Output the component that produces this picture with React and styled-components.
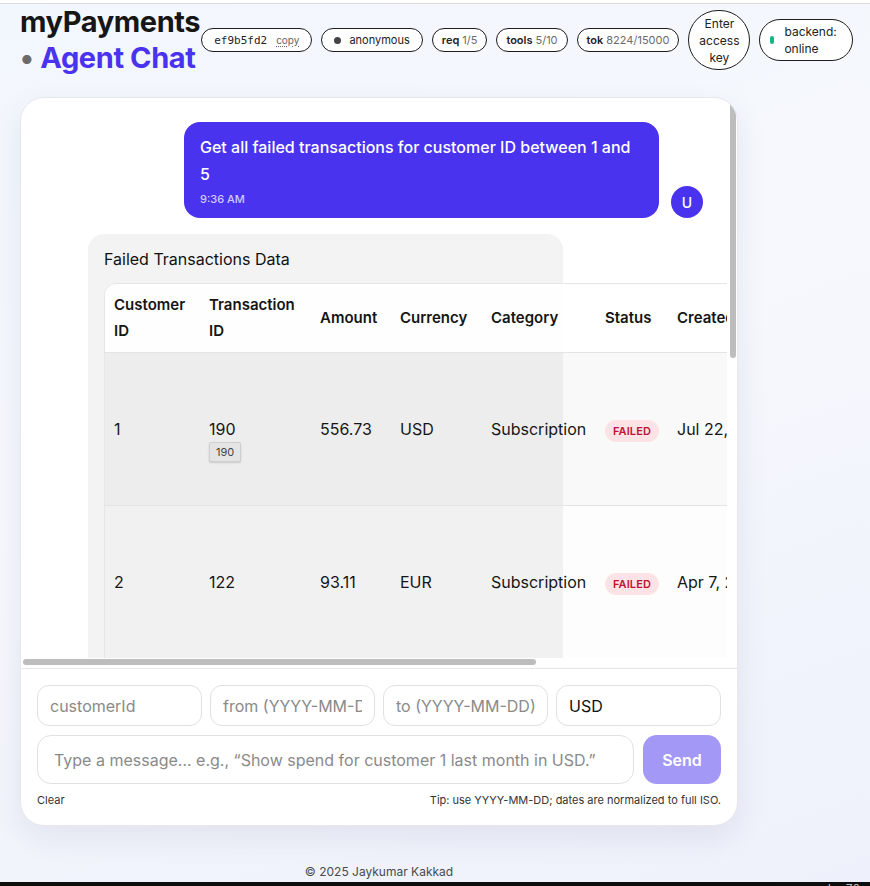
import React from "react";
import styled, { createGlobalStyle } from "styled-components";

const GlobalStyle = createGlobalStyle`
  html, body {
    margin: 0;
    padding: 0;
    background: #fff;
  }
  body {
    font-family: Inter, "Noto Sans", "Liberation Sans", sans-serif;
    color: #111;
  }
  * {
    box-sizing: border-box;
  }
`;

const Page = styled.div`
  margin-top: 3px;
  border-top: 1px solid #dcdcdc;
  padding: 0 20px;
  background: linear-gradient(160deg, #f2f7fd 0%, #f6f8fd 45%, #eef0fb 100%);
`;

const Header = styled.header`
  display: flex;
  align-items: center;
  gap: 9px;
`;

const Title = styled.h1`
  margin: 0 -8px 0 0;
  font-size: 29px;
  line-height: 36px;
  font-weight: 700;
  letter-spacing: -0.4px;
  color: #161616;
`;

const TitleLine = styled.span`
  display: block;
`;

const TitleDot = styled.span`
  color: #6b6b6b;
  margin-right: 7px;
`;

const TitleAccent = styled.span`
  color: #4a33ee;
`;

const Pill = styled.span`
  display: inline-flex;
  align-items: center;
  gap: ${(p) => p.$gap || 3}px;
  height: 24px;
  padding: 0 ${(p) => p.$pad || 9}px;
  border: 1px solid #1d1d1d;
  border-radius: 999px;
  background: #fff;
  font-size: 11px;
  color: #222;
  white-space: nowrap;

  b {
    font-weight: 600;
  }
  em {
    font-style: normal;
    color: #6a6a6a;
  }
`;

const Mono = styled.span`
  font-family: "DejaVu Sans Mono", "Liberation Mono", monospace;
  font-size: 11px;
  color: #222;
`;

const CopyLink = styled.span`
  font-size: 10px;
  color: #666;
  text-decoration: underline dotted;
  text-underline-offset: 2px;
`;

const Dot = styled.i`
  flex: none;
  width: ${(p) => p.$w || 7}px;
  height: ${(p) => p.$h || 7}px;
  border-radius: 4px;
  background: ${(p) => p.$color || "#444"};
`;

const KeyButton = styled.button`
  flex: none;
  width: 62px;
  height: 60px;
  padding: 0 6px;
  border: 1px solid #1d1d1d;
  border-radius: 999px;
  background: #fff;
  font-family: inherit;
  font-size: 12px;
  line-height: 17px;
  color: #222;
`;

const Status = styled.div`
  flex: none;
  display: flex;
  align-items: center;
  gap: 10px;
  width: 94px;
  height: 42px;
  padding: 0 10px;
  border: 1px solid #1d1d1d;
  border-radius: 999px;
  background: #fff;
  font-size: 12px;
  line-height: 17px;
  color: #222;
`;

const Card = styled.section`
  width: 718px;
  height: 729px;
  margin-top: 21px;
  display: flex;
  flex-direction: column;
  background: #fff;
  border: 1px solid #e7e8ee;
  border-radius: 24px;
  box-shadow: 0 12px 32px rgba(30, 30, 80, 0.08);
  overflow: hidden;
`;

const ScrollPane = styled.div`
  position: relative;
  flex: 1;
  min-height: 0;
  display: flex;
`;

const Messages = styled.div`
  flex: 1;
  min-width: 0;
  margin: 0 10px 10px 0;
  overflow: auto;
  scrollbar-width: none;
  padding: 24px 24px 24px 23px;
  display: flex;
  flex-direction: column;
  gap: 16px;
`;

const Thumb = styled.div`
  position: absolute;
  background: #bdbdbd;
  border-radius: 4px;
  ${(p) =>
    p.$vertical
      ? "top: 2px; right: 1px; width: 6px; height: 258px;"
      : "left: 2px; bottom: 3px; height: 6px; width: 513px;"}
`;

const Row = styled.div`
  display: flex;
  align-items: flex-end;
  gap: 12px;
  justify-content: ${(p) => (p.$mine ? "flex-end" : "flex-start")};
`;

const Avatar = styled.div`
  flex: none;
  width: 32px;
  height: 32px;
  border-radius: 50%;
  display: flex;
  align-items: center;
  justify-content: center;
  font-size: 14px;
  font-weight: 500;
  color: #fff;
  background: ${(p) => (p.$mine ? "#4a33ee" : "#9aa0ac")};
`;

const Bubble = styled.div`
  max-width: 475px;
  padding: 12px 16px;
  border-radius: 16px;
  background: ${(p) => (p.$mine ? "#4a33ee" : "#f3f3f3")};
  color: ${(p) => (p.$mine ? "#fff" : "#111")};
  font-size: 16px;
  line-height: 27px;
  font-weight: ${(p) => (p.$mine ? 500 : 400)};
`;

const Time = styled.div`
  margin-top: 4px;
  font-size: 11px;
  line-height: 14px;
  color: rgba(255, 255, 255, 0.75);
`;

const TableBox = styled.div`
  margin-top: 10px;
  width: 900px;
  border: 1px solid #e6e6e6;
  border-radius: 12px;
  overflow: hidden;
`;

const Table = styled.table`
  width: 100%;
  table-layout: fixed;
  border-collapse: separate;
  border-spacing: 0;
  font-size: 16px;

  th {
    text-align: left;
    vertical-align: middle;
    padding: 8px 9px;
    font-size: 15px;
    line-height: 26px;
    font-weight: 600;
    color: #151515;
    background: rgba(255, 255, 255, 0.85);
  }
  td {
    height: 153px;
    padding: 0 9px;
    vertical-align: middle;
    border-top: 1px solid #e4e4e4;
    color: #161616;
    white-space: nowrap;
  }
`;

const BodyRow = styled.tr`
  background: ${(p) => (p.$hover ? "rgba(0,0,0,0.024)" : "rgba(0,0,0,0.008)")};
`;

const Badge = styled.span`
  display: inline-flex;
  align-items: center;
  height: 22px;
  padding: 0 8px;
  border-radius: 999px;
  background: #fde2e6;
  color: #be123c;
  font-size: 11px;
  font-weight: 600;
  letter-spacing: 0.1px;
`;

const Hint = styled.span`
  position: relative;
  display: inline-block;
`;

const Tip = styled.span`
  position: absolute;
  left: 0;
  top: 100%;
  margin-top: -1px;
  padding: 2px 6px;
  background: #e4e4e4;
  border: 1px solid #cfcfcf;
  border-radius: 2px;
  box-shadow: 0 1px 2px rgba(0, 0, 0, 0.15);
  font-size: 11px;
  line-height: 14px;
  color: #444;
`;

const Composer = styled.div`
  flex: none;
  border-top: 1px solid #e6e6e6;
  padding: 16px;
  display: flex;
  flex-direction: column;
  gap: 8px;
`;

const Filters = styled.div`
  display: grid;
  grid-template-columns: repeat(4, 1fr);
  gap: 8px;
`;

const Field = styled.input`
  width: 100%;
  min-width: 0;
  height: 41px;
  padding: 0 12px;
  border: 1px solid #e1e1e4;
  border-radius: 12px;
  font-family: inherit;
  font-size: 16px;
  color: #111;
  background: #fff;

  &::placeholder {
    color: #8a8a8a;
  }
`;

const SendRow = styled.div`
  display: flex;
  gap: 9px;
  margin-top: 1px;
`;

const MessageField = styled(Field)`
  flex: 1;
  height: 49px;
  padding: 0 16px;
  border-radius: 14px;
`;

const SendButton = styled.button`
  flex: none;
  width: 78px;
  height: 49px;
  border: none;
  border-radius: 14px;
  background: #4a33ee;
  opacity: 0.5;
  color: #fff;
  font-family: inherit;
  font-size: 16px;
  font-weight: 600;
`;

const Meta = styled.div`
  display: flex;
  justify-content: space-between;
  font-size: 11px;
  line-height: 17px;
  color: #333;
`;

const Footer = styled.footer`
  width: 718px;
  padding: 38px 0 2px;
  text-align: center;
  font-size: 12px;
  line-height: 16px;
  color: #4a4a4a;
`;

const DevBar = styled.div`
  margin: 0 -20px;
  height: 20px;
  background: #0d0d0d;
  display: flex;
  justify-content: flex-end;
  padding: 0 10px 0 0;
  font-size: 12px;
  line-height: 14px;
  color: #bbb;
`;

const rows = [
  { cid: 1, tid: 190, amount: "556.73", cur: "USD", cat: "Subscription", created: "Jul 22, 2025, 10:14 AM", merchant: "StreamBox" },
  { cid: 2, tid: 122, amount: "93.11", cur: "EUR", cat: "Subscription", created: "Apr 7, 2025, 3:42 PM", merchant: "CloudNote" },
  { cid: 3, tid: 57, amount: "1204.50", cur: "USD", cat: "Electronics", created: "Feb 18, 2025, 9:05 AM", merchant: "TechMart" },
  { cid: 3, tid: 211, amount: "48.00", cur: "GBP", cat: "Dining", created: "May 30, 2025, 8:20 PM", merchant: "Bistro 21" },
  { cid: 4, tid: 88, amount: "310.25", cur: "INR", cat: "Travel", created: "Mar 11, 2025, 6:47 AM", merchant: "RailGo" },
  { cid: 5, tid: 143, amount: "75.90", cur: "USD", cat: "Groceries", created: "Jun 2, 2025, 12:31 PM", merchant: "FreshCart" },
];

const cols = [95, 111, 80, 91, 114, 72, 187, 150];

export default function App() {
  return (
    <>
      <GlobalStyle />
      <Page>
        <Header>
          <Title>
            <TitleLine>myPayments</TitleLine>
            <TitleLine>
              <TitleDot>•</TitleDot>
              <TitleAccent>Agent Chat</TitleAccent>
            </TitleLine>
          </Title>
          <Pill $gap={9} $pad={12}>
            <Mono>ef9b5fd2</Mono>
            <CopyLink>copy</CopyLink>
          </Pill>
          <Pill $gap={8} $pad={12}>
            <Dot />
            anonymous
          </Pill>
          <Pill>
            <b>req</b>
            <em>1/5</em>
          </Pill>
          <Pill>
            <b>tools</b>
            <em>5/10</em>
          </Pill>
          <Pill>
            <b>tok</b>
            <em>8224/15000</em>
          </Pill>
          <KeyButton>Enter access key</KeyButton>
          <Status>
            <Dot $w={4} $h={8} $color="#10b981" />
            <span>backend: online</span>
          </Status>
        </Header>

        <Card>
          <ScrollPane>
            <Messages>
              <Row $mine>
                <Bubble $mine>
                  Get all failed transactions for customer ID between 1 and 5
                  <Time>9:36 AM</Time>
                </Bubble>
                <Avatar $mine>U</Avatar>
              </Row>
              <Row>
                <Avatar>A</Avatar>
                <Bubble>
                  Failed Transactions Data
                  <TableBox>
                    <Table>
                      <colgroup>
                        {cols.map((w, i) => (
                          <col key={i} style={{ width: w }} />
                        ))}
                      </colgroup>
                      <thead>
                        <tr>
                          <th>Customer ID</th>
                          <th>Transaction ID</th>
                          <th>Amount</th>
                          <th>Currency</th>
                          <th>Category</th>
                          <th>Status</th>
                          <th>Created At</th>
                          <th>Merchant</th>
                        </tr>
                      </thead>
                      <tbody>
                        {rows.map((r, i) => (
                          <BodyRow key={i} $hover={i === 0}>
                            <td>{r.cid}</td>
                            <td>
                              <Hint>
                                {r.tid}
                                {i === 0 && <Tip>{r.tid}</Tip>}
                              </Hint>
                            </td>
                            <td>{r.amount}</td>
                            <td>{r.cur}</td>
                            <td>{r.cat}</td>
                            <td>
                              <Badge>FAILED</Badge>
                            </td>
                            <td>{r.created}</td>
                            <td>{r.merchant}</td>
                          </BodyRow>
                        ))}
                      </tbody>
                    </Table>
                  </TableBox>
                </Bubble>
              </Row>
            </Messages>
            <Thumb $vertical />
            <Thumb />
          </ScrollPane>

          <Composer>
            <Filters>
              <Field placeholder="customerId" />
              <Field placeholder="from (YYYY-MM-DD)" />
              <Field placeholder="to (YYYY-MM-DD)" />
              <Field defaultValue="USD" />
            </Filters>
            <SendRow>
              <MessageField placeholder="Type a message… e.g., “Show spend for customer 1 last month in USD.”" />
              <SendButton disabled>Send</SendButton>
            </SendRow>
            <Meta>
              <span>Clear</span>
              <span>Tip: use YYYY-MM-DD; dates are normalized to full ISO.</span>
            </Meta>
          </Composer>
        </Card>

        <Footer>© 2025 Jaykumar Kakkad</Footer>
        <DevBar>
          <span>L= 70</span>
        </DevBar>
      </Page>
    </>
  );
}
